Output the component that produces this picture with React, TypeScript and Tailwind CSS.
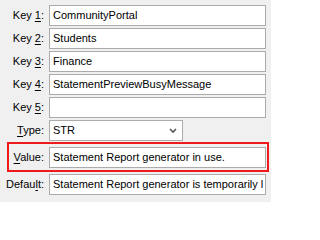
import React from "react";

const Label = ({ pre, u, post }: { pre: string; u: string; post: string }) => (
  <div className="w-[44px] shrink-0 text-right whitespace-nowrap">
    {pre}
    <span className="underline underline-offset-2">{u}</span>
    {post}
  </div>
);

const Box = ({ value, width = "w-[217px]" }: { value: string; width?: string }) => (
  <div
    className={`${width} ml-[5px] h-[21px] border border-[#ababab] bg-white pl-[3px] flex items-center overflow-hidden whitespace-nowrap`}
  >
    {value}
  </div>
);

const keys = [
  { n: "1", v: "CommunityPortal" },
  { n: "2", v: "Students" },
  { n: "3", v: "Finance" },
  { n: "4", v: "StatementPreviewBusyMessage" },
  { n: "5", v: "" },
];

const App = () => {
  return (
    <div
      className="w-[271px] h-[202px] bg-[#f0f0f0] text-[11px] text-black pt-[5px] overflow-hidden"
      style={{ fontFamily: '"Liberation Sans", Arial, sans-serif' }}
    >
      {keys.map((k) => (
        <div key={k.n} className="flex items-center h-[21px] mb-[2px]">
          <Label pre="Key " u={k.n} post=":" />
          <Box value={k.v} />
        </div>
      ))}
      <div className="flex items-center h-[21px] mt-[2px]">
        <Label pre="" u="T" post="ype:" />
        <div className="w-[134px] ml-[5px] h-[21px] border border-[#ababab] bg-white pl-[3px] pr-[5px] flex items-center justify-between">
          <span>STR</span>
          <svg width="8" height="6" viewBox="0 0 8 6">
            <path d="M1 1 L4 4 L7 1" fill="none" stroke="#555" strokeWidth="1.6" />
          </svg>
        </div>
      </div>
      <div className="ml-[7px] mt-[1px] w-[262px] h-[30px] border-2 border-[#f01a1a] flex items-center">
        <div className="w-[35px] shrink-0 text-right whitespace-nowrap">
          <span className="underline underline-offset-2">V</span>alue:
        </div>
        <Box value="Statement Report generator in use." />
      </div>
      <div className="flex items-center h-[21px] mt-[2px]">
        <Label pre="Defau" u="l" post="t:" />
        <Box value="Statement Report generator is temporarily l" />
      </div>
    </div>
  );
};

export default App;
